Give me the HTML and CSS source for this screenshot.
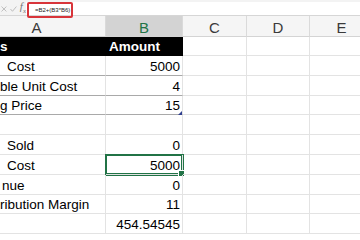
FILE: index.html
```html
<!DOCTYPE html>
<html>
    <head>
        <title>Break Even</title>
        <meta name="viewport" content="width=device-width, initial-scale=1.0">
        <link rel="stylesheet" href="styles.css">
    </head>
    <body>
        <div class="formula-bar">
            <div class="bar-icons">
                <svg width="6" height="6" viewBox="0 0 6 6"><path d="M0.5 0.5 L5.5 5.5 M5.5 0.5 L0.5 5.5" stroke="#bdbdbd" stroke-width="1" fill="none"/></svg>
                <svg width="7" height="6" viewBox="0 0 7 6"><path d="M0.5 3 L2.5 5.3 L6.5 0.5" stroke="#bdbdbd" stroke-width="1" fill="none"/></svg>
                <span class="fx">f<sub>x</sub></span>
            </div>
            <div class="formula-input">
                <span class="formula-text">=B2+(B3*B6)</span>
            </div>
            <div class="mark"></div>
        </div>

        <div class="sheet">
            <!-- column headers (A is scrolled partly out of view) -->
            <div class="col-head first">A</div>
            <div class="col-head active">B</div>
            <div class="col-head">C</div>
            <div class="col-head">D</div>
            <div class="col-head">E</div>

            <!-- table header -->
            <div class="cell dark">s</div>
            <div class="cell dark">Amount</div>
            <div class="cell"></div>
            <div class="cell"></div>
            <div class="cell"></div>

            <div class="cell ruled indent">Cost</div>
            <div class="cell ruled num">5000</div>
            <div class="cell"></div>
            <div class="cell"></div>
            <div class="cell"></div>

            <div class="cell ruled">ble Unit Cost</div>
            <div class="cell ruled num">4</div>
            <div class="cell"></div>
            <div class="cell"></div>
            <div class="cell"></div>

            <div class="cell ruled">g Price</div>
            <div class="cell ruled num table-end">15</div>
            <div class="cell"></div>
            <div class="cell"></div>
            <div class="cell"></div>

            <div class="cell"></div>
            <div class="cell"></div>
            <div class="cell"></div>
            <div class="cell"></div>
            <div class="cell"></div>

            <div class="cell indent">Sold</div>
            <div class="cell num">0</div>
            <div class="cell"></div>
            <div class="cell"></div>
            <div class="cell"></div>

            <div class="cell indent">Cost</div>
            <div class="cell num selected">5000</div>
            <div class="cell"></div>
            <div class="cell"></div>
            <div class="cell"></div>

            <div class="cell small-indent">nue</div>
            <div class="cell num">0</div>
            <div class="cell"></div>
            <div class="cell"></div>
            <div class="cell"></div>

            <div class="cell">ribution Margin</div>
            <div class="cell num">11</div>
            <div class="cell"></div>
            <div class="cell"></div>
            <div class="cell"></div>

            <div class="cell"></div>
            <div class="cell num">454.54545</div>
            <div class="cell"></div>
            <div class="cell"></div>
            <div class="cell"></div>
        </div>
    </body>
</html>
```

FILE: styles.css
```css
/* ---- General ---- */
* {
    box-sizing: border-box;
}

body {
    margin: 0;
    background-color: #fff;
    font-family: 'Liberation Sans', Arial, sans-serif;
    overflow: hidden;
}

/* ---- Formula bar ---- */
.formula-bar {
    background-color: #f3f3f3;
    border-bottom: 1px solid #d6d6d6;
    display: flex;
    height: 16px;
    position: relative;
}

.bar-icons {
    align-items: center;
    display: flex;
    gap: 3px;
    padding-left: 1px;
    padding-top: 2px;
    width: 26px;
}

.fx {
    color: #777;
    font-family: 'Liberation Serif', serif;
    font-size: 11px;
    font-style: italic;
    line-height: 10px;
}

.fx sub {
    font-size: 7px;
}

.formula-input {
    background-color: #fff;
    flex: 1;
    font-size: 6px;
    line-height: 8px;
    margin-top: 2px;
    padding-left: 9px;
    padding-top: 4px;
}

.formula-text {
    color: #222;
}

/* red annotation box round the formula */
.mark {
    border: 2px solid #d8343a;
    border-radius: 2px;
    height: 16px;
    left: 27px;
    position: absolute;
    top: 2px;
    width: 46px;
}

/* ---- Sheet ---- */
.sheet {
    display: grid;
    grid-template-columns: 106px 77px 64px 63px 64px;
    grid-template-rows: 21px 19px repeat(9, 19.8px);
}

.col-head {
    align-items: center;
    background-color: #f5f5f5;
    border-bottom: 1px solid #d4d4d4;
    border-right: 1px solid #dadada;
    color: #3a3a3a;
    display: flex;
    font-size: 15px;
    justify-content: center;
    padding-top: 3px;
}

.col-head.first {
    padding-right: 32px;
}

.col-head.active {
    background-color: #d3d3d3;
    color: #217346;
}

.cell {
    align-items: flex-end;
    border-bottom: 1px solid #e3e3e3;
    border-right: 1px solid #e3e3e3;
    color: #000;
    display: flex;
    font-size: 13.5px;
    line-height: 16px;
    padding-right: 2px;
    position: relative;
    white-space: nowrap;
}

.cell.dark {
    background-color: #000;
    border-color: #000;
    color: #fff;
    font-weight: bold;
}

.cell.dark + .cell.dark {
    padding-left: 3px;
}

.cell.ruled {
    border-bottom-color: #a9a9a9;
}

.indent {
    padding-left: 7px;
}

.small-indent {
    padding-left: 2px;
}

.num {
    justify-content: flex-end;
}

/* table resize handle */
.table-end::after {
    border-bottom: 4px solid #2f3f8f;
    border-left: 4px solid transparent;
    bottom: -1px;
    content: "";
    position: absolute;
    right: 0;
}

.selected {
    box-shadow: inset 0 0 0 1px #217346, 0 0 0 1px #217346;
}

.selected::after {
    background-color: #217346;
    border: 1px solid #fff;
    bottom: -3px;
    content: "";
    height: 5px;
    position: absolute;
    right: -3px;
    width: 5px;
}
```
